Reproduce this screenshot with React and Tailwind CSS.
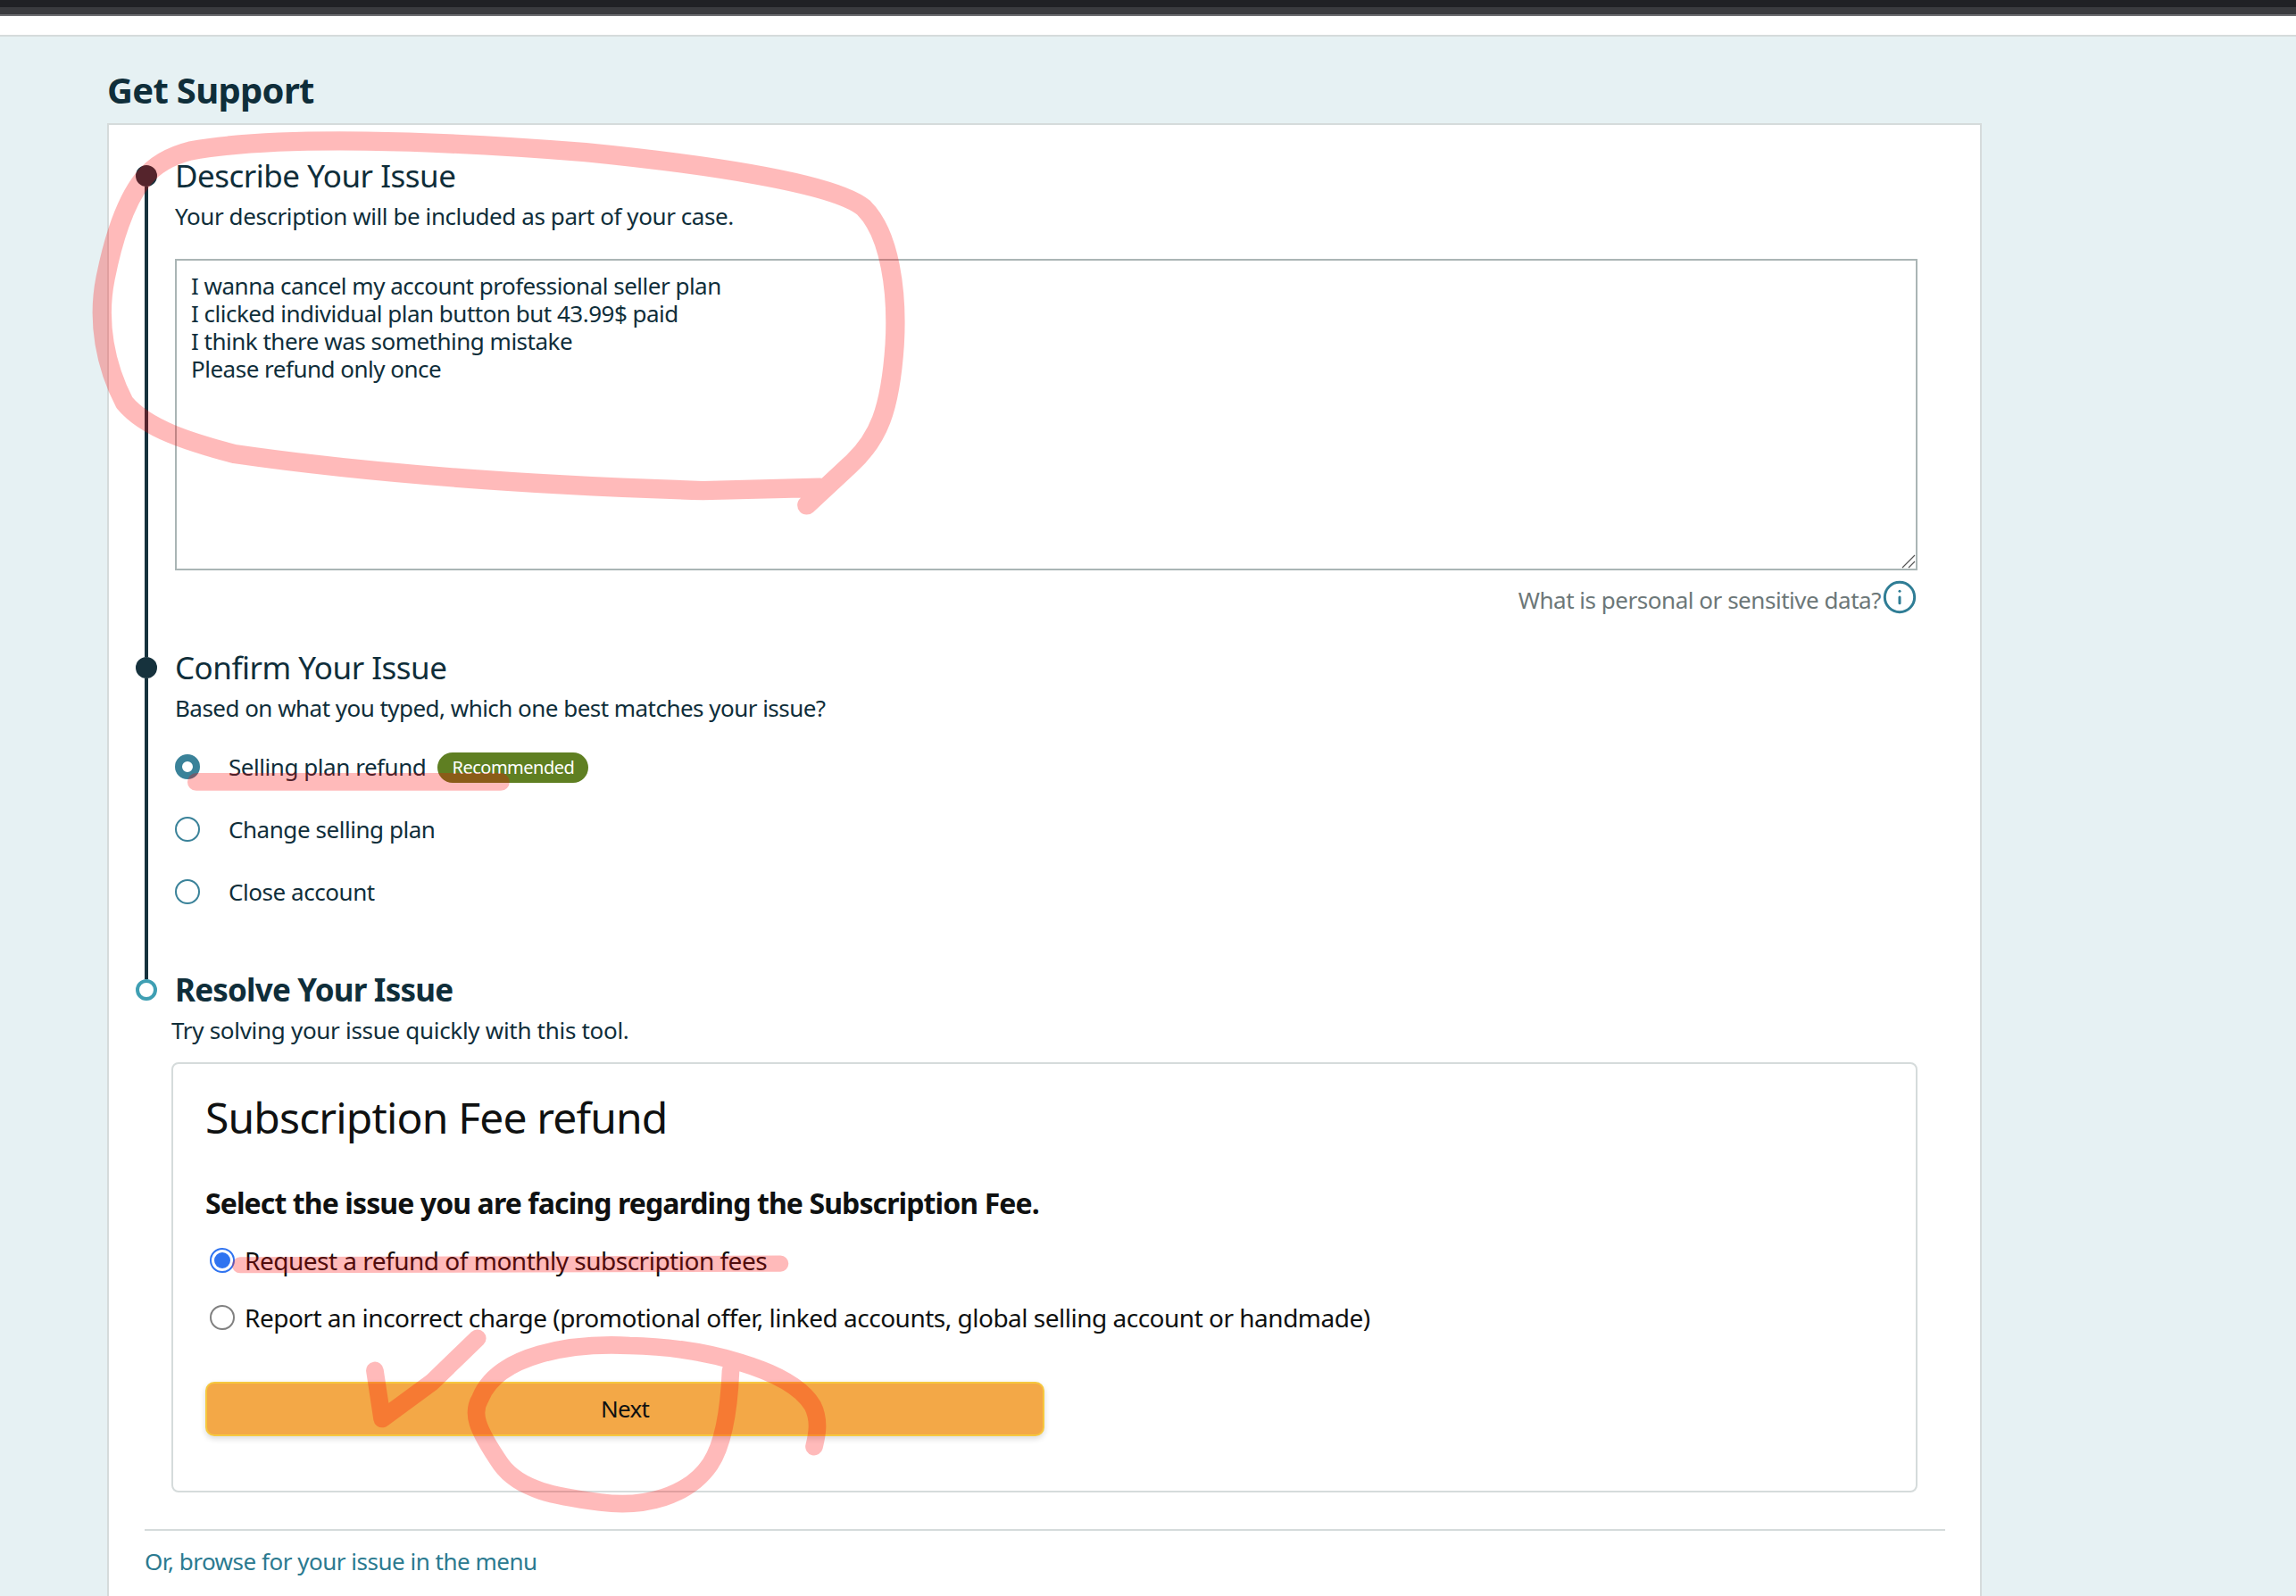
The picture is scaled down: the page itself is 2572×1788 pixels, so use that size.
import React from 'react';
import { Info } from 'lucide-react';

const Step = ({ dot, first, last, pb, children }) => (
  <div className="flex">
    <div className="flex w-6 shrink-0 flex-col items-center">
      <div className={`h-2 w-1 ${first ? '' : 'bg-[#16323d]'}`} />
      {dot}
      {!last && <div className="w-1 flex-1 bg-[#16323d]" />}
    </div>
    <div className={`ml-5 min-w-0 flex-1 ${pb}`}>{children}</div>
  </div>
);

const SolidDot = () => <div className="h-6 w-6 shrink-0 rounded-full bg-[#16323d]" />;
const RingDot = () => <div className="h-6 w-6 shrink-0 rounded-full border-4 border-[#3f9fb3] bg-white" />;

const IssueOption = ({ label, checked, children }) => (
  <div className="flex h-9 items-center">
    <span
      className={`h-7 w-7 shrink-0 rounded-full bg-white border-[#3a8299] ${checked ? 'border-[8px]' : 'border-2'}`}
    />
    <span className="ml-8 text-[26px] tracking-[-0.45px] text-[#0f2e3a]">{label}</span>
    {children}
  </div>
);

const ToolRadio = ({ label, checked }) => (
  <div className="flex h-9 items-center text-[28px] tracking-[-0.5px] text-[#0f1111]">
    <span
      className={`ml-[5px] flex h-7 w-7 shrink-0 items-center justify-center rounded-full border-2 bg-white ${checked ? 'border-[#2f73f0]' : 'border-[#808080]'}`}
    >
      {checked && <span className="h-[18px] w-[18px] rounded-full bg-[#2f73f0]" />}
    </span>
    <span className="ml-[11px]">{label}</span>
  </div>
);

const Scribbles = () => (
  <svg
    viewBox="0 0 1568 1090"
    className="pointer-events-none absolute left-0 top-0 h-[1788px] w-[2572px]"
    fill="none"
    stroke="#ff0000"
    strokeOpacity="0.27"
    strokeLinecap="round"
    strokeLinejoin="round"
  >
    <path
      strokeWidth="13"
      d="M551 345 L580 318 C600 300 608 280 611 235 C613 200 608 160 590 142 C570 125 480 112 400 104 C300 96 190 92 130 103 C118 106 106 112 98 122 C86 137 78 160 72 190 C66 220 72 250 85 275 C100 293 130 302 160 310 C250 323 350 331 480 335 L560 333"
    />
    <path strokeWidth="12" d="M134 534 L342 534" />
    <path strokeWidth="11" d="M164 864 L533 863" />
    <path strokeWidth="12" d="M256 936 L261 969 L295 944 L326 914" />
    <path
      strokeWidth="12"
      d="M499 936 C498 960 495 985 485 1000 C470 1022 440 1030 410 1026 C380 1022 355 1018 342 1000 C325 975 322 965 328 955 C340 925 390 917 430 919 C480 920 540 935 555 960 C560 970 558 980 556 988"
    />
  </svg>
);

const App = () => {
  return (
    <div className="relative h-[1788px] w-[2572px] overflow-hidden bg-[#e6f1f3] font-['Noto_Sans',sans-serif]">
      <div className="h-2 bg-[#202125]" />
      <div className="h-2 bg-[#3a3b3f]" />
      <div className="h-0.5 bg-[#6b6c70]" />
      <div className="h-[21px] border-b-2 border-[#d5dbdb] bg-white box-content" />

      <div className="ml-[120px] w-[2100px] pt-[34px]">
        <h1 className="h-[63px] text-[40px] font-bold leading-[52px] tracking-[-0.7px] text-[#0f2e3a]">Get Support</h1>

        <div className="h-[1700px] border-2 border-[#d5dbdb] bg-white pl-[30px] pr-[39px] pt-[37px]">
          <div className="pr-[31px]">
            <Step dot={<SolidDot />} first pb="pb-[38px]">
              <h2 className="h-10 text-[35px] leading-10 tracking-[-0.5px] text-[#0f2e3a]">Describe Your Issue</h2>
              <p className="mt-[7px] h-9 text-[26px] leading-9 tracking-[-0.42px] text-[#0f2e3a]">
                Your description will be included as part of your case.
              </p>
              <div className="relative mt-[30px]">
                <textarea
                  readOnly
                  className="block h-[349px] w-full resize-none border-2 border-[#aab5b5] px-4 py-[13px] text-[26px] leading-[31px] tracking-[-0.5px] text-[#0f2e3a] outline-none"
                  defaultValue={
                    'I wanna cancel my account professional seller plan\nI clicked individual plan button but 43.99$ paid\nI think there was something mistake\nPlease refund only once'
                  }
                />
                <svg viewBox="0 0 16 16" className="absolute bottom-[2px] right-[2px] h-4 w-4" stroke="#555" strokeWidth="1.2">
                  <path d="M1 15 L15 1 M8 15 L15 8" />
                </svg>
              </div>
              <div className="mt-[15px] flex h-9 items-center justify-end">
                <span className="mr-px text-[26px] tracking-[-0.47px] text-[#6c7778]">What is personal or sensitive data?</span>
                <Info size={40} strokeWidth={1.8} className="-mt-1.5 text-[#2f7d95]" />
              </div>
            </Step>

            <Step dot={<SolidDot />} pb="pb-[72px]">
              <h2 className="h-10 text-[35px] leading-10 tracking-[-0.5px] text-[#0f2e3a]">Confirm Your Issue</h2>
              <p className="mt-[7px] h-9 text-[26px] leading-9 tracking-[-0.53px] text-[#0f2e3a]">
                Based on what you typed, which one best matches your issue?
              </p>
              <div className="mt-[30px] flex flex-col gap-[34px]">
                <IssueOption label="Selling plan refund" checked>
                  <span className="ml-[13px] mt-px flex h-[34px] w-[169px] items-center justify-center rounded-full bg-[#5f7f22] text-[20px] tracking-[-0.5px] text-white">
                    Recommended
                  </span>
                </IssueOption>
                <IssueOption label="Change selling plan" />
                <IssueOption label="Close account" />
              </div>
            </Step>

            <Step dot={<RingDot />} last pb="pb-0">
              <h2 className="h-10 text-[35px] font-bold leading-10 tracking-[-0.8px] text-[#0f2e3a]">Resolve Your Issue</h2>
              <p className="-ml-1 mt-[7px] h-9 text-[26px] leading-9 tracking-[-0.3px] text-[#0f2e3a]">
                Try solving your issue quickly with this tool.
              </p>
              <div className="-ml-1 mt-[18px] h-[482px] rounded-lg border-2 border-[#d5dbdb] px-9 pt-[28px]">
                <h3 className="h-16 text-[48px] leading-[64px] tracking-[-0.85px] text-[#0f1111]">Subscription Fee refund</h3>
                <p className="mt-[44px] h-10 text-[32px] font-bold leading-10 tracking-[-0.9px] text-[#0f1111]">
                  Select the issue you are facing regarding the Subscription Fee.
                </p>
                <div className="mt-[26px] flex flex-col gap-7">
                  <ToolRadio label="Request a refund of monthly subscription fees" checked />
                  <ToolRadio label="Report an incorrect charge (promotional offer, linked accounts, global selling account or handmade)" />
                </div>
                <button className="mt-[54px] block h-[61px] w-[940px] rounded-[10px] border-2 border-[#f6c83f] bg-[#f3a847] text-[26px] tracking-[-0.7px] text-[#0f1111] shadow-[0_3px_6px_rgba(15,17,17,0.15)]">
                  Next
                </button>
              </div>
            </Step>
          </div>

          <div className="ml-[10px] mt-[41px] h-0.5 bg-[#d5dbdb]" />
          <a className="ml-[10px] mt-[16px] block text-[26px] leading-9 tracking-[-0.49px] text-[#2b7a90]">
            Or, browse for your issue in the menu
          </a>
        </div>
      </div>

      <Scribbles />
    </div>
  );
};

export default App;
